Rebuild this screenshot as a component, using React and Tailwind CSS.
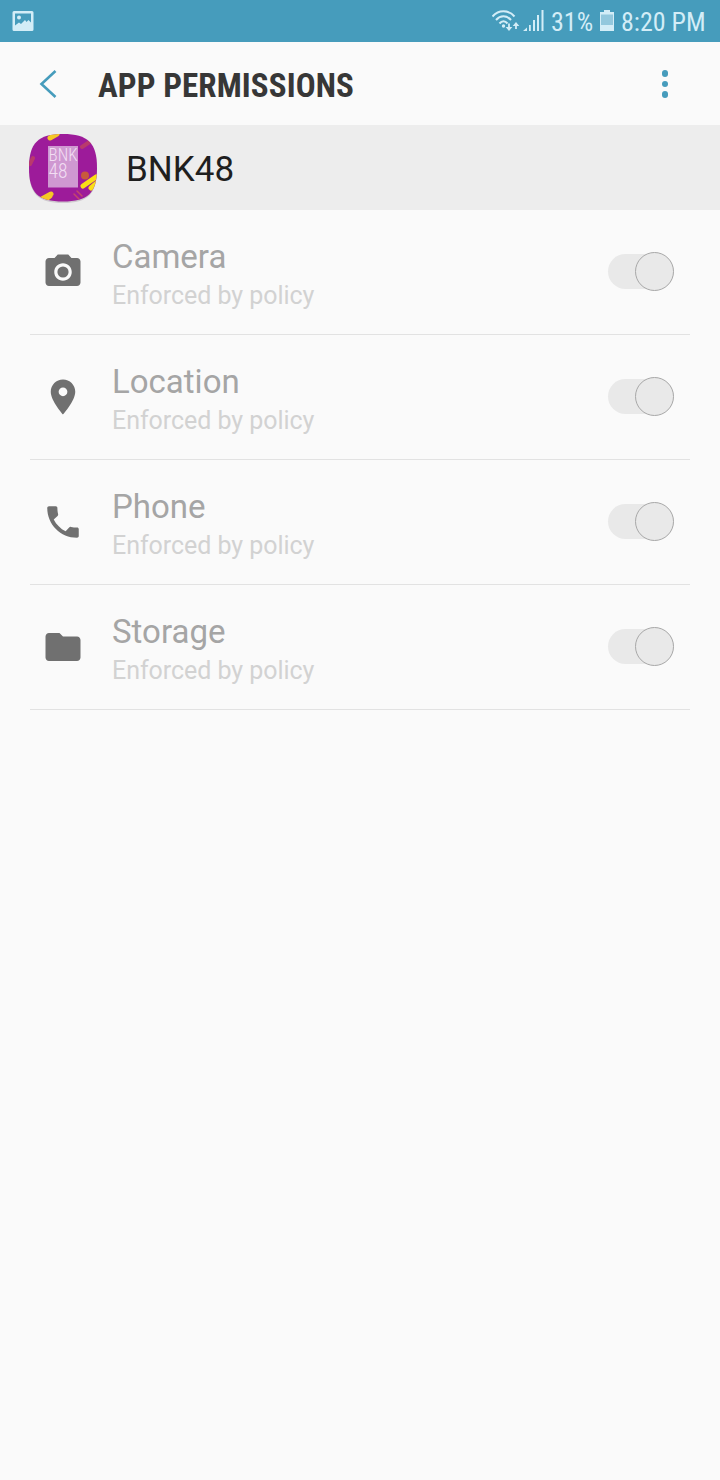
const permissions = [
  {
    name: "Camera",
    icon: "M9 2L7.17 4H4c-1.1 0-2 .9-2 2v12c0 1.1.9 2 2 2h16c1.1 0 2-.9 2-2V6c0-1.1-.9-2-2-2h-3.17L15 2H9zm3 15c-2.76 0-5-2.24-5-5s2.24-5 5-5 5 2.24 5 5-2.24 5-5 5zM12 8.8a3.2 3.2 0 1 0 0 6.4 3.2 3.2 0 0 0 0-6.4z",
  },
  {
    name: "Location",
    icon: "M12 2C8.13 2 5 5.13 5 9c0 5.25 7 13 7 13s7-7.75 7-13c0-3.87-3.13-7-7-7zm0 9.5a2.5 2.5 0 0 1 0-5 2.5 2.5 0 0 1 0 5z",
  },
  {
    name: "Phone",
    icon: "M4 3h3.9c.5 0 .9.4.9 1 0 1.300.1 2.300.4 3.400.1.4 0 .8-.3 1.100L6.700 10.500c1.500 2.900 3.900 5.300 6.800 6.800l2-2.200c.3-.3.7-.4 1.100-.3 1.100.3 2.200.4 3.400.4.6 0 1 .4 1 .9V20c0 .55-.45 1-1 1C10.610 21 3 13.390 3 4c0-.55.45-1 1-1z",
  },
  {
    name: "Storage",
    icon: "M10 4H4c-1.1 0-1.99.9-1.99 2L2 18c0 1.1.9 2 2 2h16c1.1 0 2-.9 2-2V8c0-1.1-.9-2-2-2h-8l-2-2z",
  },
];

function StatusBar() {
  return (
    <div className="flex h-[42px] items-center bg-[#469cbc] text-[#d3edf7]">
      <svg width="22" height="20" viewBox="0 0 22 20" className="ml-3" fill="currentColor">
        <path
          fillRule="evenodd"
          d="M2 0h18a1.5 1.5 0 0 1 1.5 1.5v17a1.5 1.5 0 0 1-1.5 1.5H2a1.5 1.5 0 0 1-1.5-1.5v-17A1.5 1.5 0 0 1 2 0zM3 2.5v12l4-3 2 1.5 4-4 1.5 2 2-2 2.5 2.5v-9z"
        />
        <circle cx="7" cy="6.5" r="2" />
      </svg>
      <div className="ml-auto flex items-center">
        <svg width="29" height="24" viewBox="0 0 29 24" fill="none" stroke="currentColor" strokeWidth="2">
          <path d="M.5 7.5C6.5 .5 16.5 .5 22.5 7.5M4 11C8.5 6 14.5 6 19 11M7.5 14.5c2.5-3 5.5-3 8 0" />
          <circle cx="11.5" cy="17" r="1.7" fill="currentColor" stroke="none" />
          <path d="M17 14.5v5M24 20v-5" strokeWidth="1.8" />
          <path d="M13.7 18l3.3 4 3.3-4zM20.7 17l3.3-4 3.3 4z" fill="currentColor" stroke="none" />
        </svg>
        <svg width="22" height="22" viewBox="0 0 22 22" className="ml-0.5" fill="currentColor">
          <path d="M0 21l4-3.5V21zM6 15h1.8v6H6zM10 10h2v11h-2zM14 5h2v16h-2zM18.5 0h2v21h-2z" />
        </svg>
        <span className="mt-0.5 ml-[6px] w-[42px] font-['Roboto_Condensed',Roboto,sans-serif] text-[26px] leading-none whitespace-nowrap font-stretch-condensed">
          31%
        </span>
        <svg width="14" height="21" viewBox="0 0 14 21" className="mb-0.5 ml-[7px]" fill="currentColor">
          <path d="M4 0h6v2h4v19H0V2h4z" opacity="0.55" />
          <path d="M4 0h6v2h4v2.5H0V2h4zM0 15h14v6H0zM0 3h1v14H0zM13 3h1v14h-1z" />
        </svg>
        <span className="mt-0.5 ml-[7px] w-[99px] font-['Roboto_Condensed',Roboto,sans-serif] text-[26px] leading-none whitespace-nowrap font-stretch-condensed">
          8:20 PM
        </span>
      </div>
    </div>
  );
}

function Header() {
  return (
    <header className="flex h-[83px] items-center">
      <svg width="18" height="28" viewBox="0 0 18 28" className="ml-[39px]" fill="none" stroke="#469cbc" strokeWidth="2.6">
        <path d="M16.5 1L2.5 14l14 13" />
      </svg>
      <h1 className="mt-1 ml-[41px] font-['Roboto_Condensed',Roboto,sans-serif] text-[33px] leading-none font-bold tracking-[0.1px] whitespace-nowrap text-[#373737] font-stretch-condensed">
        APP PERMISSIONS
      </h1>
      <div className="mt-px mr-[52px] ml-auto flex flex-col gap-1">
        <span className="size-[6.5px] rounded-full bg-[#469cbc]" />
        <span className="size-[6.5px] rounded-full bg-[#469cbc]" />
        <span className="size-[6.5px] rounded-full bg-[#469cbc]" />
      </div>
    </header>
  );
}

function AppLogo() {
  return (
    <svg width="70" height="70" viewBox="0 0 70 70" className="ml-7">
      <defs>
        <clipPath id="logo">
          <path d="M35 1C60 1 69 10 69 35S60 68.500 35 68.500 1 60 1 35 10 1 35 1z" />
        </clipPath>
      </defs>
      <path d="M35 2C60 2 69 11 69 36S60 70 35 70 1 61 1 36 10 2 35 2z" fill="#cfc9cf" />
      <g clipPath="url(#logo)">
        <rect width="70" height="70" fill="#9d1b9a" />
        <g strokeLinecap="round" fill="none">
          <path d="M22 5l7-4M12 67l11-6M18 66l4-3" stroke="#f5c825" strokeWidth="5" />
          <path d="M55 53l13-9M63 55l6-5" stroke="#fbdf15" strokeWidth="5" />
          <path d="M2 31l3-6M54 14l9-6" stroke="#b93a6c" strokeWidth="4" />
          <path d="M46 61l5 5M49 58l5 5" stroke="#c5486a" strokeWidth="1.5" />
        </g>
        <circle cx="57" cy="42.5" r="4" fill="#c85a3c" />
      </g>
      <rect x="20" y="13" width="30" height="41.5" fill="#cf98d1" />
      <text fill="#f2def3" fontFamily="Roboto" fontWeight="300" className="font-stretch-condensed">
        <tspan x="20.5" y="28" fontSize="18" textLength="29" lengthAdjust="spacingAndGlyphs">BNK</tspan>
        <tspan x="20.5" y="44.5" fontSize="20" textLength="19" lengthAdjust="spacingAndGlyphs">48</tspan>
      </text>
    </svg>
  );
}

function Toggle() {
  return (
    <div className="mr-4 mb-px flex h-[35px] w-[66px] items-center justify-end rounded-full bg-[#e9e9e9]">
      <span className="size-[39px] shrink-0 rounded-full border border-[#a8a8a8] bg-[#e9e9e9]" />
    </div>
  );
}

function PermissionRow({ name, icon }) {
  return (
    <li className="mx-[30px] flex h-[125px] items-center border-b border-[#e2e2e2]">
      <svg width="42" height="42" viewBox="0 0 24 24" fill="#707070" className="mb-px ml-3 shrink-0">
        <path d={icon} />
      </svg>
      <div className="ml-7 flex-1 pt-2">
        <p className="text-[33px] leading-[39px] text-[#a5a5a5]">{name}</p>
        <p className="text-[25px] leading-[39px] tracking-[-0.05px] text-[#d2d2d2]">Enforced by policy</p>
      </div>
      <Toggle />
    </li>
  );
}

export default function App() {
  return (
    <div className="h-[1480px] w-[720px] overflow-hidden bg-[#fafafa] font-[Roboto,sans-serif]">
      <StatusBar />
      <Header />
      <div className="flex h-[85px] items-center bg-[#ededed]">
        <AppLogo />
        <p className="mt-1 ml-7 text-[35px] leading-none text-[#1f1f1f]">BNK48</p>
      </div>
      <ul>
        {permissions.map((p) => (
          <PermissionRow key={p.name} name={p.name} icon={p.icon} />
        ))}
      </ul>
    </div>
  );
}
